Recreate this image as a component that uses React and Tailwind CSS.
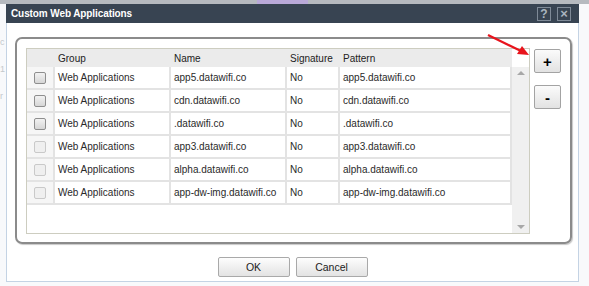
import React from 'react';

const rows = [
  { name: 'app5.datawifi.co', pattern: 'app5.datawifi.co', enabled: true },
  { name: 'cdn.datawifi.co', pattern: 'cdn.datawifi.co', enabled: true },
  { name: '.datawifi.co', pattern: '.datawifi.co', enabled: true },
  { name: 'app3.datawifi.co', pattern: 'app3.datawifi.co', enabled: false },
  { name: 'alpha.datawifi.co', pattern: 'alpha.datawifi.co', enabled: false },
  { name: 'app-dw-img.datawifi.co', pattern: 'app-dw-img.datawifi.co', enabled: false },
];

const Checkbox = ({ enabled }) => (
  <div
    className={`w-[12px] h-[12px] rounded-[2px] border ${
      enabled
        ? 'border-[#8e8e8e] bg-gradient-to-b from-[#f2f2f2] to-[#d6d6d6]'
        : 'border-[#c9c9c9] bg-[#efefef]'
    }`}
  />
);

const Cell = ({ w, children, className = '' }) => (
  <div className={`${w} h-full flex items-center pl-[3px] border-r-2 border-[#e3e3e3] bg-white ${className}`}>
    {children}
  </div>
);

const AppTable = () => (
  <div className="w-[504px] h-[186px] border border-[#cdcdc0] bg-white flex">
    <div className="w-[485px] flex flex-col">
      <div className="h-[18px] flex bg-[#ebebeb] text-[#222]">
        <div className="w-[28px]" />
        <div className="w-[116px] pl-[3px] flex items-center">Group</div>
        <div className="w-[116px] pl-[3px] flex items-center">Name</div>
        <div className="w-[53px] pl-[3px] flex items-center">Signature</div>
        <div className="w-[172px] pl-[3px] flex items-center">Pattern</div>
      </div>
      {rows.map((r) => (
        <div key={r.name} className="h-[23px] flex border-b-2 border-[#e3e3e3] text-[#2a2a2a]">
          <div className="w-[28px] h-full flex items-center justify-center border-r-2 border-[#e3e3e3] bg-[#f6f6f6]">
            <Checkbox enabled={r.enabled} />
          </div>
          <Cell w="w-[116px]">Web Applications</Cell>
          <Cell w="w-[116px]">{r.name}</Cell>
          <Cell w="w-[53px]">No</Cell>
          <Cell w="w-[172px]">{r.pattern}</Cell>
        </div>
      ))}
    </div>
    <div className="w-[17px] flex flex-col">
      <div className="h-[18px] bg-white" />
      <div className="flex-1 bg-[#f0f0f0] flex flex-col items-center justify-between py-[4px]">
        <div className="w-0 h-0 border-x-[4px] border-x-transparent border-b-[4px] border-b-[#a8a8a8]" />
        <div className="w-0 h-0 border-x-[4px] border-x-transparent border-t-[4px] border-t-[#a8a8a8]" />
      </div>
    </div>
  </div>
);

const SideButton = ({ children }) => (
  <button className="w-[27px] h-[24px] rounded-[2px] border border-[#a3a3a3] bg-gradient-to-b from-[#fbfbfb] to-[#e2e2e2] flex items-center justify-center text-[15px] font-bold text-black leading-none">
    {children}
  </button>
);

const FooterButton = ({ children }) => (
  <button className="w-[72px] h-[20px] rounded-[2px] border border-[#a9a9a9] bg-gradient-to-b from-[#fdfdfd] to-[#e3e3e3] text-[10.5px] text-[#222] leading-none">
    {children}
  </button>
);

export default function App() {
  return (
    <div className="relative w-[589px] h-[286px] overflow-hidden bg-[#f8f9fb] font-['Liberation_Sans',Arial,sans-serif] text-[10px]">
      {/* background app nav, mostly hidden */}
      <div className="h-[4px] flex bg-[#b6babf]">
        <div className="w-[257px]" />
        <div className="w-[51px] bg-[#b9a9d8]" />
      </div>

      <div className="flex">
        <div className="w-[6px] h-[282px] flex flex-col text-[9px] text-[#c4c8cc] leading-none pt-[34px] gap-[18px]">
          <span>c</span>
          <span>1</span>
          <span>r</span>
        </div>

        <div className="w-[573px] h-[278px] flex flex-col">
          <div className="h-[19px] bg-[#384452] flex items-center justify-between pl-[5px] pr-[8px]">
            <span className="text-white font-bold text-[10px] tracking-[-0.1px]">Custom Web Applications</span>
            <div className="flex gap-[6px]">
              <div className="w-[14px] h-[14px] border border-[#7f8a97] flex items-center justify-center text-[#aab4bf] font-bold text-[12px] leading-none">?</div>
              <div className="w-[14px] h-[14px] border border-[#7f8a97] flex items-center justify-center text-[#aab4bf] font-bold text-[13px] leading-none">×</div>
            </div>
          </div>

          <div className="flex-1 bg-white border-x border-b border-[#c4d3e4] flex flex-col pt-[14px] pl-[8px]">
            <div className="w-[557px] h-[207px] border-2 border-[#8b8b8b] rounded-[7px] shadow-[1px_1px_1px_#c8c8c8] flex pt-[9px] pl-[9px] gap-[4px]">
              <AppTable />
              <div className="flex flex-col gap-[12px] pt-[1px]">
                <SideButton>+</SideButton>
                <SideButton>-</SideButton>
              </div>
            </div>

            <div className="flex justify-center gap-[6px] mt-[13px] -ml-[8px]">
              <FooterButton>OK</FooterButton>
              <FooterButton>Cancel</FooterButton>
            </div>
          </div>
        </div>
      </div>

      {/* red annotation arrow */}
      <svg className="absolute left-0 top-0" width="589" height="286" viewBox="0 0 589 286">
        <line x1="488" y1="35" x2="521" y2="51" stroke="#e8141c" strokeWidth="2.2" />
        <polygon points="529,55 517,54 522,46" fill="#e8141c" />
      </svg>
    </div>
  );
}
